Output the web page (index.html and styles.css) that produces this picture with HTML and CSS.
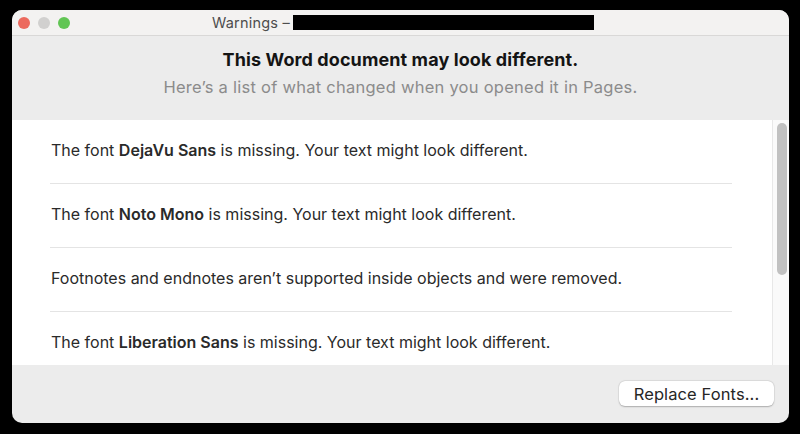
FILE: index.html
```html
<!DOCTYPE html>
<html lang="en">
<head>
    <meta charset="UTF-8">
    <title>Warnings</title>
    <link rel="stylesheet" href="styles.css">
</head>
<body>
    <div class="window">
        <!-- 标题栏 -->
        <div class="titlebar">
            <div class="lights">
                <span class="light red"></span>
                <span class="light gray"></span>
                <span class="light green"></span>
            </div>
            <div class="title">Warnings – <span class="redacted"></span></div>
        </div>

        <!-- 说明 -->
        <div class="intro">
            <h1 class="intro-title">This Word document may look different.</h1>
            <p class="intro-sub">Here’s a list of what changed when you opened it in Pages.</p>
        </div>

        <!-- 警告列表 -->
        <div class="list-wrap">
            <ul class="warn-list">
                <li class="warn">The font <b>DejaVu Sans</b> is missing. Your text might look different.</li>
                <li class="warn">The font <b>Noto Mono</b> is missing. Your text might look different.</li>
                <li class="warn">Footnotes and endnotes aren’t supported inside objects and were removed.</li>
                <li class="warn">The font <b>Liberation Sans</b> is missing. Your text might look different.</li>
            </ul>
            <div class="scroll-track">
                <div class="scroll-thumb"></div>
            </div>
        </div>

        <!-- 底部按钮 -->
        <div class="footer">
            <button class="btn">Replace Fonts...</button>
        </div>
    </div>
</body>
</html>
```

FILE: styles.css
```css
* {
    margin: 0;
    padding: 0;
    box-sizing: border-box;
}

body {
    background: #000;
    font-family: Inter, "Noto Sans", sans-serif;
    padding: 10px 11px 10px 12px;
}

.window {
    width: 777px;
    height: 413px;
    background: #ececec;
    border-radius: 10px;
    overflow: hidden;
    display: flex;
    flex-direction: column;
}

/* 标题栏 */
.titlebar {
    height: 26px;
    flex: 0 0 26px;
    background: #f3f2f1;
    border-bottom: 1px solid #d9d8d7;
    display: flex;
    align-items: center;
}

.lights {
    display: flex;
    gap: 8px;
    padding-left: 6px;
}

.light {
    width: 12px;
    height: 12px;
    border-radius: 50%;
    display: block;
}

.red { background: #ec6a5e; }
.gray { background: #d1d0cf; }
.green { background: #61c554; }

.title {
    display: flex;
    align-items: center;
    margin-left: 142px;
    font-size: 14.5px;
    letter-spacing: 0.2px;
    color: #4d4d4d;
    gap: 3px;
}

.redacted {
    display: block;
    width: 301px;
    height: 15px;
    background: #000;
}

/* 说明区域 */
.intro {
    height: 84px;
    flex: 0 0 84px;
    text-align: center;
    padding-top: 13px;
}

.intro-title {
    font-size: 18px;
    font-weight: 700;
    letter-spacing: 0.1px;
    color: #141414;
    line-height: 22px;
}

.intro-sub {
    font-size: 16.5px;
    letter-spacing: 0.25px;
    color: #8b8b8b;
    line-height: 20px;
    margin-top: 6px;
}

/* 列表 */
.list-wrap {
    height: 245px;
    flex: 0 0 245px;
    background: #fff;
    display: flex;
}

.warn-list {
    list-style: none;
    flex: 1;
    padding: 0 40px 0 38px;
    overflow: hidden;
}

.warn {
    font-size: 16px;
    color: #2a2a2a;
    line-height: 18px;
    padding: 21px 0 24px 1px;
    border-bottom: 1px solid #e4e4e4;
    white-space: nowrap;
}

.warn b {
    font-weight: 600;
}

.scroll-track {
    width: 17px;
    background: #fafafa;
    border-left: 1px solid #e8e8e8;
    padding: 3px 0 0 4px;
}

.scroll-thumb {
    width: 10px;
    height: 152px;
    border-radius: 5px;
    background: #c1c1c1;
}

/* 底部 */
.footer {
    flex: 1;
    display: flex;
    justify-content: flex-end;
    padding: 16px 15px 0 0;
}

.btn {
    width: 155px;
    height: 25px;
    border: none;
    border-radius: 6px;
    background: #fff;
    font-family: Inter, "Noto Sans", sans-serif;
    font-size: 16.5px;
    letter-spacing: 0.1px;
    color: #262626;
    box-shadow: 0 0.5px 1.5px rgba(0,0,0,0.25), 0 0 0 0.5px rgba(0,0,0,0.06);
}
```
